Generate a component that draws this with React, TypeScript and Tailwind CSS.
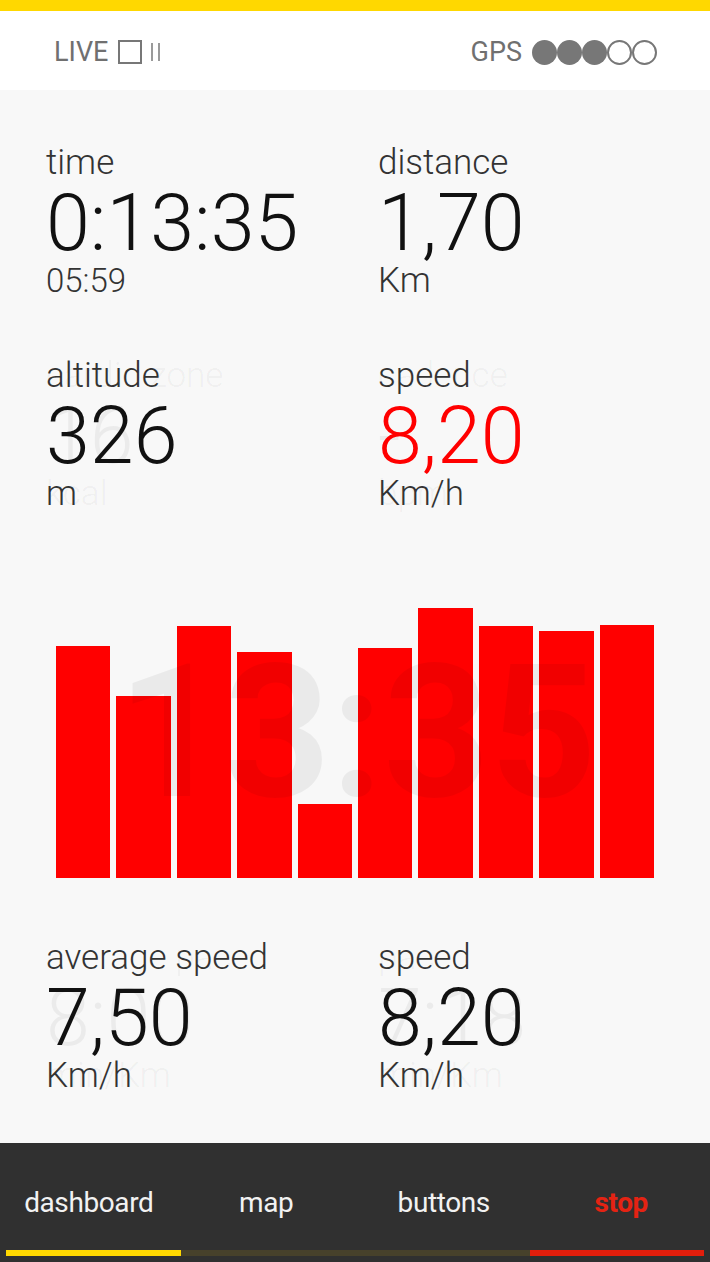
import React from "react";

type Ghost = { label: string; value: string; sub: string };

interface StatProps {
  label: string;
  value: string;
  sub: string;
  valueColor?: string;
  subSize?: string;
  ghost?: Ghost;
}

function Stat({ label, value, sub, valueColor = "text-[#111]", subSize = "text-[35px]", ghost }: StatProps) {
  return (
    <div className="grid">
      {/* faded field fading out behind the current one */}
      {ghost && (
        <div className="[grid-area:1/1] flex flex-col font-light text-black/[0.05]">
          <div className="text-[35px] leading-[36px]">{ghost.label}</div>
          <div className="text-[79px] leading-[85px]">{ghost.value}</div>
          <div className="text-[35px] leading-[29px]">{ghost.sub}</div>
        </div>
      )}
      <div className="[grid-area:1/1] flex flex-col font-light">
        <div className="text-[35px] leading-[36px] text-[#333]">{label}</div>
        <div className={`text-[79px] leading-[85px] ${valueColor}`}>{value}</div>
        <div className={`${subSize} leading-[29px] text-[#333]`}>{sub}</div>
      </div>
    </div>
  );
}

const bars = [232, 182, 252, 226, 74, 230, 270, 252, 247, 253];

export default function App() {
  return (
    <div className="w-[710px] h-[1262px] flex flex-col bg-[#f8f8f8] font-['Roboto',sans-serif] overflow-hidden">
      {/* top accent */}
      <div className="h-[11px] bg-[#ffd800]" />

      {/* status header */}
      <header className="h-[79px] bg-white flex items-center justify-between pl-[54px] pr-[53px] pt-[3px] text-[#707070]">
        <div className="flex items-center">
          <span className="text-[27px] leading-none">LIVE</span>
          <span className="ml-[10px] w-[24px] h-[24px] border-2 border-[#777]" />
          <span className="ml-[9px] flex gap-[5px]">
            <span className="w-[2px] h-[18px] bg-[#9a9a9a]" />
            <span className="w-[2px] h-[18px] bg-[#9a9a9a]" />
          </span>
        </div>
        <div className="flex items-center">
          <span className="text-[27px] leading-none">GPS</span>
          <div className="ml-[10px] flex">
            <span className="w-[25px] h-[25px] rounded-full bg-[#777]" />
            <span className="w-[25px] h-[25px] rounded-full bg-[#777]" />
            <span className="w-[25px] h-[25px] rounded-full bg-[#777]" />
            <span className="w-[25px] h-[25px] rounded-full border-2 border-[#777]" />
            <span className="w-[25px] h-[25px] rounded-full border-2 border-[#777]" />
          </div>
        </div>
      </header>

      <main className="flex-1 flex flex-col pt-[55px]">
        <div className="grid grid-cols-[332px_1fr] gap-y-[63px] pl-[46px]">
          <Stat label="time" value="0:13:35" sub="05:59" subSize="text-[33px]" />
          <Stat label="distance" value="1,70" sub="Km" />
          <Stat
            label="altitude"
            value="326"
            sub="m"
            ghost={{ label: "cardio zone", value: "16", sub: "kcal" }}
          />
          <Stat
            label="speed"
            value="8,20"
            sub="Km/h"
            valueColor="text-[#ff0000]"
            ghost={{ label: "cadence", value: "-", sub: "bpm" }}
          />
        </div>

        {/* speed chart */}
        <div className="relative h-[432px] flex items-end gap-[6px] px-[56px] pb-[62px]">
          {bars.map((h, i) => (
            <div key={i} className="flex-1 bg-[#ff0000]" style={{ height: h }} />
          ))}
          <div className="absolute left-0 right-0 top-[131px] pl-[4px] text-center text-[186px] leading-[186px] font-bold text-black/[0.055] pointer-events-none">
            13:35
          </div>
        </div>

        <div className="grid grid-cols-[332px_1fr] pl-[46px]">
          <Stat
            label="average speed"
            value="7,50"
            sub="Km/h"
            ghost={{ label: "average pace", value: "8:00", sub: "min/Km" }}
          />
          <Stat
            label="speed"
            value="8,20"
            sub="Km/h"
            ghost={{ label: "pace", value: "7:18", sub: "min/Km" }}
          />
        </div>
      </main>

      {/* bottom navigation */}
      <nav className="h-[119px] bg-[#303030] flex flex-col pt-[44px] pb-[6px]">
        <div className="grid grid-cols-4 h-[32px] text-[28px] leading-[32px] tracking-[-0.4px] text-center">
          <span className="text-[#f2f2f2]">dashboard</span>
          <span className="text-[#f2f2f2]">map</span>
          <span className="text-[#f2f2f2]">buttons</span>
          <span className="text-[#e42313] font-bold">stop</span>
        </div>
        <div className="mt-[31px] h-[6px] px-[6px] grid grid-cols-4">
          <div className="bg-[#ffd800]" />
          <div className="col-span-2 bg-[#47412b]" />
          <div className="bg-[#e21e0c]" />
        </div>
      </nav>
    </div>
  );
}
